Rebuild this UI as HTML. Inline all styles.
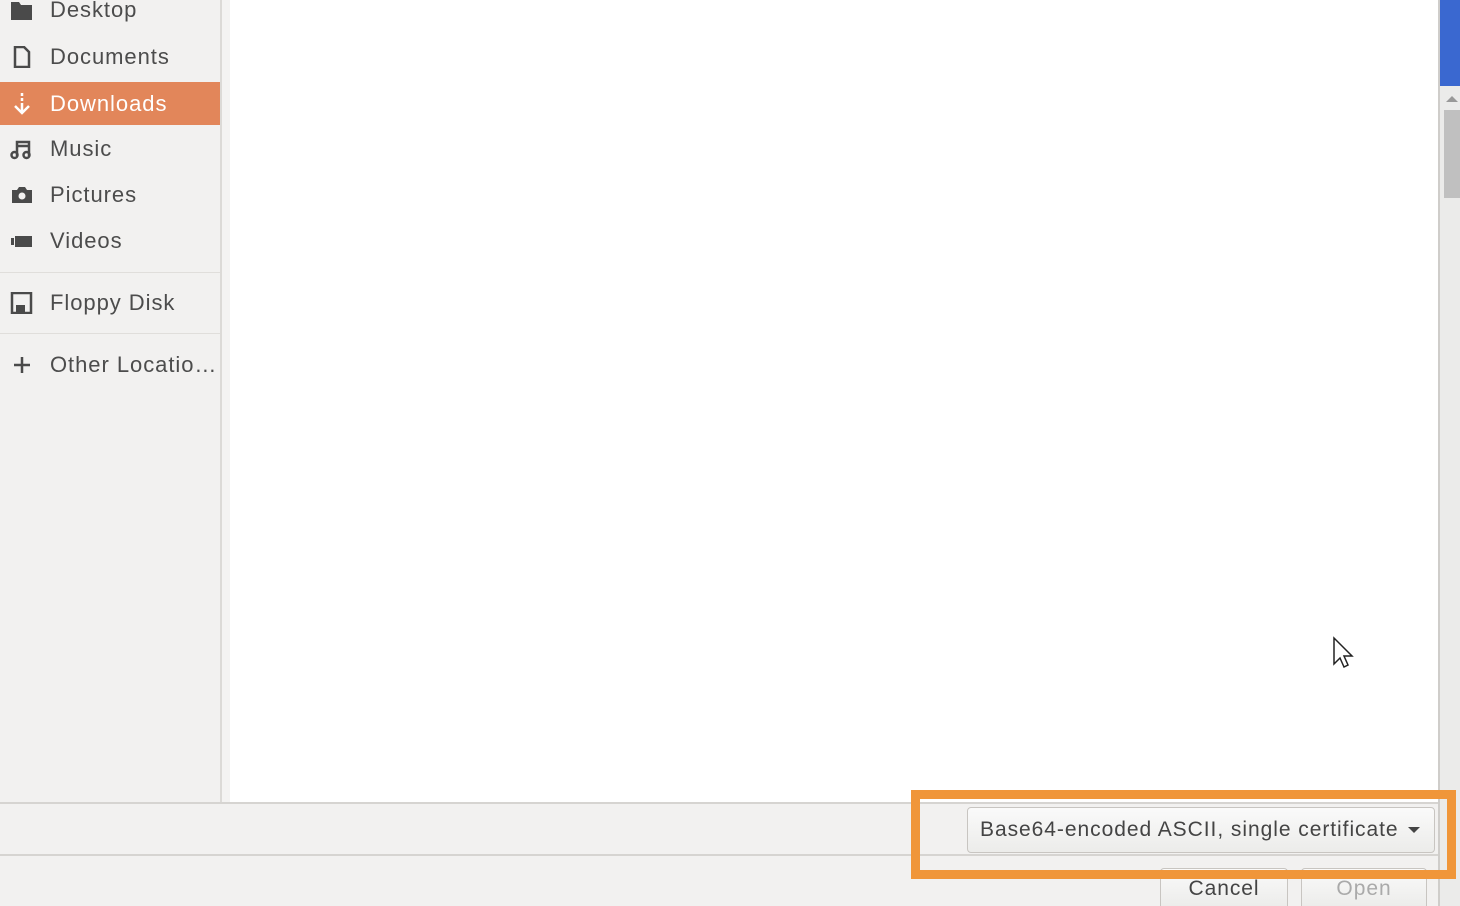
<!DOCTYPE html>
<html style="overflow:hidden"><head><style>
html,body{margin:0;width:1460px;height:906px;overflow:hidden}
body{background:#fff;font-family:"Liberation Sans",sans-serif;position:relative;letter-spacing:0.95px}
.a{position:absolute}
.side{left:0;top:0;width:220px;height:802px;background:#f2f1f0;border-right:2px solid #dcdad7}
.it{position:absolute;left:0;width:220px;height:44px;line-height:44px;font-size:22px;color:#4c4c4c;white-space:nowrap}
.it span{position:absolute;left:50px}
.it svg{position:absolute;left:10px;top:11px}
.sel{background:#e2865a;color:#fff}
.sep{position:absolute;left:0;width:220px;height:1px;background:#e0dedb}
.btn{position:absolute;border:1px solid #c8c5c1;border-radius:4px;background:linear-gradient(#fafafa,#ececea);font-size:21px;color:#444;text-align:center;white-space:nowrap}
</style></head><body>
<div class="a side">
<div class="it" style="top:-12px"><svg width="24" height="22"><path d="M1 3h8l2 3h11v15H1z" fill="#4a4a4a"/></svg><span>Desktop</span></div>
<div class="it" style="top:35px"><svg width="24" height="22"><path d="M5 1h9l5 5v15H5z" fill="none" stroke="#4a4a4a" stroke-width="2.5"/></svg><span>Documents</span></div>
<div class="it sel" style="top:82px;height:43px"><svg width="24" height="22"><path d="M12 0v3M12 5v3M12 10v9M5 13l7 7 7-7" fill="none" stroke="#fff" stroke-width="2.5"/></svg><span>Downloads</span></div>
<div class="it" style="top:127px"><svg width="24" height="22"><path d="M7 18V4h12v14M7 8h12" fill="none" stroke="#4a4a4a" stroke-width="2.5"/><circle cx="4.5" cy="17" r="3" fill="none" stroke="#4a4a4a" stroke-width="2.5"/><circle cx="16.5" cy="17" r="3" fill="none" stroke="#4a4a4a" stroke-width="2.5"/></svg><span>Music</span></div>
<div class="it" style="top:173px"><svg width="24" height="22"><path d="M2 6h5l2-3h6l2 3h5v13H2z" fill="#4a4a4a"/><circle cx="12" cy="12" r="3.5" fill="#f2f1f0"/></svg><span>Pictures</span></div>
<div class="it" style="top:219px"><svg width="24" height="22"><path d="M1 8h3v7H1zM5 6h17v11H5z" fill="#4a4a4a"/></svg><span>Videos</span></div>
<div class="sep" style="top:272px"></div>
<div class="it" style="top:281px"><svg width="24" height="22"><path d="M2 1h19v20H2z" fill="none" stroke="#4a4a4a" stroke-width="2.5"/><path d="M6 13h9v7H6z" fill="#4a4a4a"/></svg><span>Floppy Disk</span></div>
<div class="sep" style="top:333px"></div>
<div class="it" style="top:343px"><svg width="24" height="22"><path d="M12 3v16M4 11h16" stroke="#4a4a4a" stroke-width="2.5"/></svg><span>Other Locatio…</span></div>
</div>
<div class="a" style="left:222px;top:0;width:8px;height:802px;background:#f4f3f2"></div>
<div class="a" style="left:1438px;top:0;width:20px;height:906px;background:#ebebea;border-left:2px solid #cfcdca"></div>
<div class="a" style="left:1440px;top:0;width:20px;height:86px;background:#3a68d0"></div>
<div class="a" style="left:1446px;top:96px;width:0;height:0;border:6px solid transparent;border-bottom-color:#999;border-top:0"></div>
<div class="a" style="left:1444px;top:110px;width:16px;height:88px;background:#c0c0c0"></div>
<div class="a" style="left:0;top:802px;width:1438px;height:104px;background:#f2f1f0;border-top:2px solid #d6d4d1;overflow:hidden"></div>
<div class="a" style="left:0;top:854px;width:1438px;height:2px;background:#d6d4d1"></div>
<div class="btn" style="left:967px;top:807px;width:466px;height:44px;line-height:44px;text-align:left"><span style="margin-left:12px">Base64-encoded ASCII, single certificate</span><span style="position:absolute;right:14px;top:19px;border:6px solid transparent;border-top:6px solid #444;border-bottom:0"></span></div>
<div class="btn" style="left:1160px;top:868px;width:126px;height:38px;line-height:40px;border-bottom:0;border-radius:4px 4px 0 0">Cancel</div>
<div class="btn" style="left:1301px;top:868px;width:124px;height:38px;line-height:40px;color:#aaa;border-bottom:0;border-radius:4px 4px 0 0">Open</div>
<div class="a" style="left:911px;top:790px;width:527px;height:71px;border:9px solid #f0963a"></div>
<svg class="a" style="left:1332px;top:636px" width="24" height="34"><path d="M2 2v26l6-6 4 9 4-2-4-9h8z" fill="#fff" stroke="#222" stroke-width="1.5"/></svg>
</body></html>
